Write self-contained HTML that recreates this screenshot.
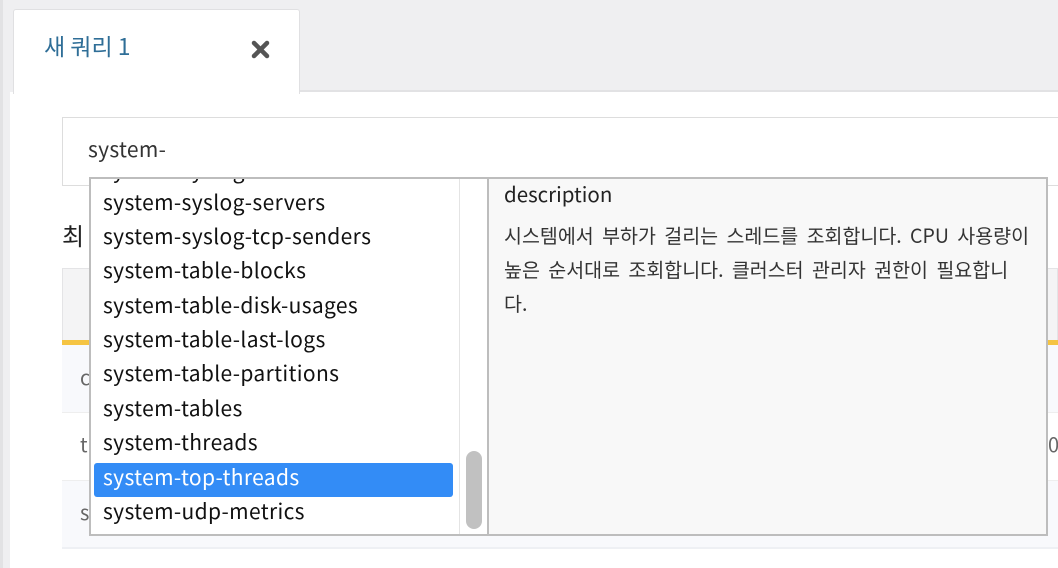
<!DOCTYPE html>
<html><head><meta charset="utf-8"><style>
*{margin:0;padding:0;box-sizing:border-box}
body{width:1058px;height:568px;overflow:hidden;background:#efeff1;font-family:"Noto Sans CJK KR",sans-serif;position:relative}
.abs{position:absolute}
.item{position:absolute;left:12px;font-size:21px;letter-spacing:0.35px;color:#111;height:34px;line-height:34px;white-space:nowrap}
.d{white-space:nowrap}
</style></head><body>
<div class="abs" style="left:0;top:0;width:3px;height:568px;background:#e2e2e4"></div>
<div class="abs" style="left:10px;top:92px;width:1048px;height:476px;background:#fff"></div>
<div class="abs" style="left:13px;top:9px;width:287px;height:85px;background:#fff;border:1px solid #e0e0e2;border-bottom:none;border-radius:3px 3px 0 0"></div>
<div class="abs" style="left:300px;top:90px;width:758px;height:2px;background:#e2e2e4"></div>
<div class="abs" style="left:44px;top:28px;font-size:23px;line-height:34px;color:#2f6e97">새 쿼리 1</div>
<svg class="abs" style="left:251px;top:40px" width="19" height="19" viewBox="0 0 19 19"><path d="M3 3L16 16M16 3L3 16" stroke="#555" stroke-width="4.5" stroke-linecap="round"/></svg>
<div class="abs" style="left:62px;top:117px;width:1000px;height:69px;border:1px solid #ddd;background:#fff"></div>
<div class="abs" style="left:88px;top:133px;font-size:21px;letter-spacing:0.3px;line-height:32px;color:#333">system-</div>
<div class="abs" style="left:62px;top:218px;font-size:24px;line-height:34px;color:#222">최</div>
<div class="abs" style="left:62px;top:268px;width:996px;height:74px;background:#f4f4f5;border:1px solid #e4e4e6"></div>
<div class="abs" style="left:62px;top:340px;width:996px;height:5px;background:#f5c443"></div>
<div class="abs" style="left:62px;top:345px;width:996px;height:67px;background:#f8f9fc"></div>
<div class="abs" style="left:62px;top:412px;width:996px;height:68px;background:#fff;border-top:1px solid #eee"></div>
<div class="abs" style="left:62px;top:480px;width:996px;height:69px;background:#f8f9fc;border-top:1px solid #eee;border-bottom:2px solid #eef0f4"></div>
<div class="abs" style="left:80px;top:362px;font-size:20px;line-height:30px;color:#666">c</div>
<div class="abs" style="left:80px;top:429px;font-size:20px;line-height:30px;color:#666">t</div>
<div class="abs" style="left:80px;top:497px;font-size:20px;line-height:30px;color:#666">s</div>
<div class="abs" style="left:1048px;top:429px;font-size:20px;line-height:30px;color:#666">0</div>
<div class="abs" style="left:89px;top:177px;width:399px;height:359px;background:#fff;border:2px solid #bdbdbd;border-right:none;overflow:hidden">
 <div class="abs" style="left:368px;top:0;width:1px;height:359px;background:#e4e4e4"></div>
 <div class="abs" style="left:375px;top:272px;width:16px;height:78px;border-radius:8px;background:#c1c1c1"></div>
 <div class="item" style="top:-26px">system-syslog</div>
 <div class="item" style="top:6px">system-syslog-servers</div>
 <div class="item" style="top:40px">system-syslog-tcp-senders</div>
 <div class="item" style="top:74px">system-table-blocks</div>
 <div class="item" style="top:109px">system-table-disk-usages</div>
 <div class="item" style="top:143px">system-table-last-logs</div>
 <div class="item" style="top:177px">system-table-partitions</div>
 <div class="item" style="top:212px">system-tables</div>
 <div class="item" style="top:246px">system-threads</div>
 <div class="abs" style="left:3px;top:284px;width:359px;height:34px;background:#338cf6;border-radius:3px"></div>
 <div class="item" style="top:281px;color:#fff">system-top-threads</div>
 <div class="item" style="top:315px">system-udp-metrics</div>
</div>
<div class="abs" style="left:487px;top:177px;width:561px;height:359px;background:#f8f8f8;border:2px solid #bdbdbd"></div>
<div class="abs" style="left:504px;top:177px;font-size:20.5px;line-height:32px;color:#222">description</div>
<div class="abs" style="left:504px;top:218px;width:545px;font-size:19.5px;word-spacing:4px;line-height:34px;color:#333"><div class="d">시스템에서 부하가 걸리는 스레드를 조회합니다. CPU 사용량이</div><div class="d">높은 순서대로 조회합니다. 클러스터 관리자 권한이 필요합니</div><div class="d">다.</div></div>
</body></html>
